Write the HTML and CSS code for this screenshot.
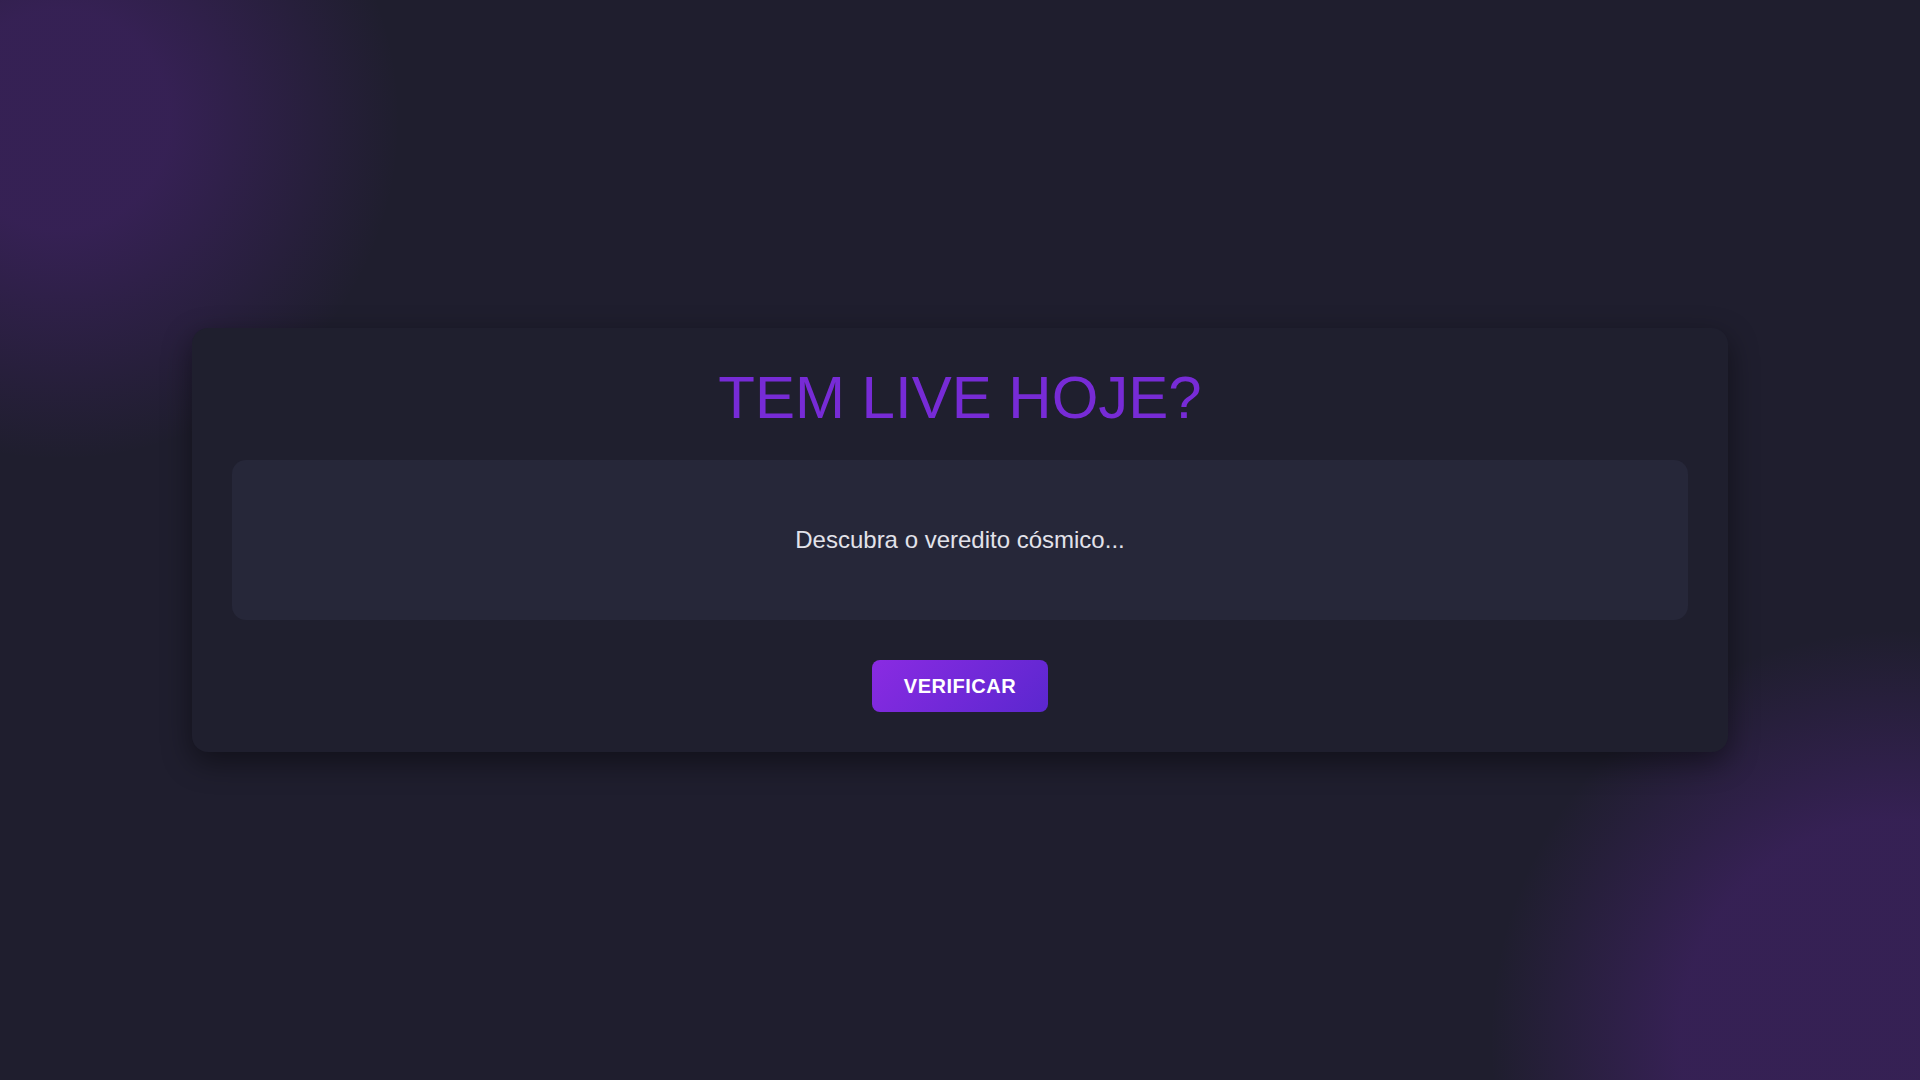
FILE: index.html
```html
<!DOCTYPE html>
<html lang="pt-BR">
<head>
  <meta charset="UTF-8" />
  <meta name="viewport" content="width=device-width, initial-scale=1" />
  <title>Tem live hoje?</title>
  <link rel="stylesheet" href="styles.css">
</head>
<body>
  <div class="container">
    <h1>TEM LIVE HOJE?</h1>

    <div class="result" id="result">
      <p>Descubra o veredito cósmico...</p>
    </div>

    <button class="check-button" type="button">VERIFICAR</button>
  </div>
</body>
</html>
```

FILE: styles.css
```css
html, body {
  height: 100%;
}
body {
  font-family: 'Liberation Sans', Arial, sans-serif;
  margin: 0;
  background-color: #1f1e2e;
  background-image:
    radial-gradient(circle at 60px 120px, rgba(138, 43, 226, 0.21) 0, rgba(138, 43, 226, 0.21) 110px, rgba(138, 43, 226, 0) 340px),
    radial-gradient(circle at 1900px 1040px, rgba(138, 43, 226, 0.21) 0, rgba(138, 43, 226, 0.21) 220px, rgba(138, 43, 226, 0) 410px);
  color: #e2e2ea;
  display: flex;
  align-items: center;
  justify-content: center;
}
.container {
  width: 80%;
  box-sizing: border-box;
  padding: 40px;
  background-color: #1f1f2e;
  border-radius: 16px;
  box-shadow: 0 10px 30px rgba(0, 0, 0, 0.45);
  display: flex;
  flex-direction: column;
  align-items: center;
}
h1 {
  margin: 0 0 32px;
  font-size: 60px;
  line-height: 1;
  font-weight: 400;
  color: #772bd6;
}
.result {
  align-self: stretch;
  height: 160px;
  background-color: #262739;
  border-radius: 14px;
  display: flex;
  align-items: center;
  justify-content: center;
}
.result p {
  margin: 0;
  font-size: 24px;
  color: #e2e2ea;
}
.check-button {
  margin-top: 40px;
  padding: 15px 32px;
  line-height: 22px;
  font-family: 'Liberation Sans', Arial, sans-serif;
  font-size: 20px;
  font-weight: bold;
  letter-spacing: 0.5px;
  color: #ffffff;
  border: none;
  border-radius: 8px;
  background: linear-gradient(135deg, #8a2be2, #5b27cf);
  cursor: pointer;
}
```
